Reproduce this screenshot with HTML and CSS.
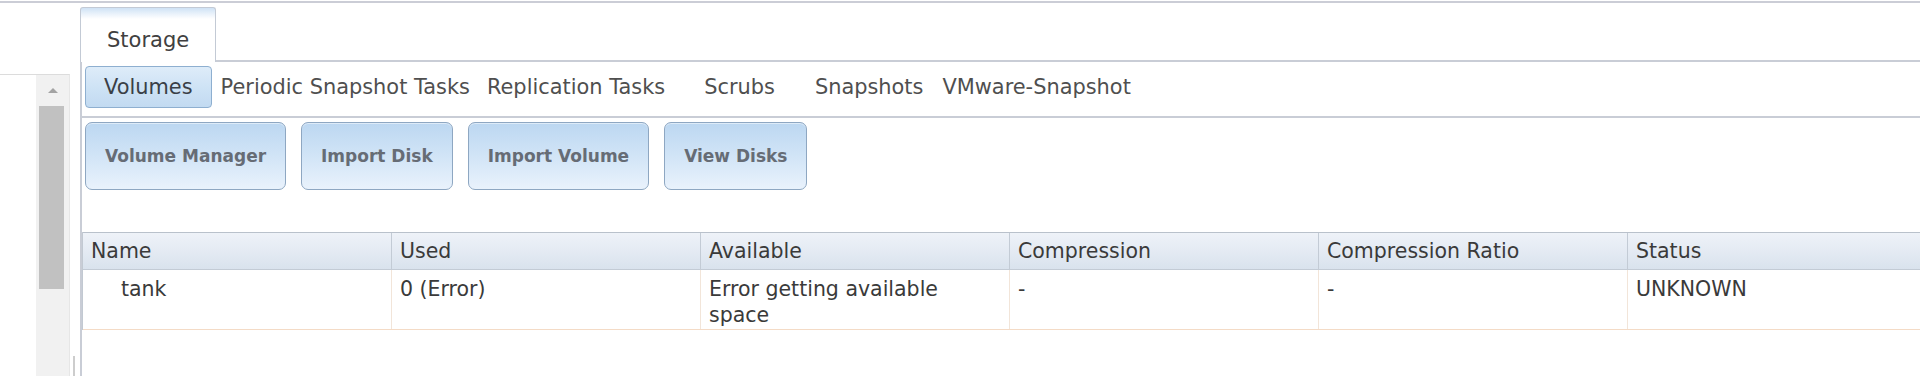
FILE: index.html
```html
<!DOCTYPE html>
<html>
<head>
<meta charset="utf-8">
<title>Storage</title>
<link rel="stylesheet" href="styles.css">
</head>
<body>
<div class="topline"></div>
<div class="layout">
  <aside class="side">
    <div class="side-head"></div>
    <div class="side-body">
      <div class="side-content"></div>
      <div class="scrollbar">
        <div class="sb-arrow-box"><div class="sb-arrow"></div></div>
        <div class="sb-thumb"></div>
      </div>
    </div>
  </aside>
  <div class="splitter"><div class="splitter-grip"></div></div>
  <main class="main">
    <div class="tabstrip">
      <div class="tab">Storage</div>
      <div class="tabfill"></div>
    </div>
    <div class="pane">
      <div class="subtabs">
        <div class="subtab subtab-active">Volumes</div>
        <div class="subtab">Periodic Snapshot Tasks</div>
        <div class="subtab subtab-repl">Replication Tasks</div>
        <div class="subtab subtab-scrubs">Scrubs</div>
        <div class="subtab">Snapshots</div>
        <div class="subtab subtab-last">VMware-Snapshot</div>
      </div>
      <div class="actions">
        <button class="btn">Volume Manager</button>
        <button class="btn">Import Disk</button>
        <button class="btn">Import Volume</button>
        <button class="btn">View Disks</button>
      </div>
      <div class="grid">
        <div class="grid-row grid-head">
          <div class="hcell">Name</div>
          <div class="hcell">Used</div>
          <div class="hcell">Available</div>
          <div class="hcell">Compression</div>
          <div class="hcell">Compression Ratio</div>
          <div class="hcell">Status</div>
        </div>
        <div class="grid-row grid-body-row">
          <div class="cell"><span class="tree-indent">tank</span></div>
          <div class="cell">0 (Error)</div>
          <div class="cell">Error getting available space</div>
          <div class="cell">-</div>
          <div class="cell">-</div>
          <div class="cell">UNKNOWN</div>
        </div>
      </div>
    </div>
  </main>
</div>
</body>
</html>
```

FILE: styles.css
```css
* { box-sizing: border-box; }

html, body {
  margin: 0;
  padding: 0;
  width: 1920px;
  height: 376px;
  overflow: hidden;
  background: #ffffff;
  font-family: "DejaVu Sans", Verdana, sans-serif;
  color: #3c3c3c;
}

body { padding-top: 1px; }

.topline {
  height: 2px;
  background: #cbcdd6;
}

.layout {
  display: flex;
  height: 373px;
}

/* left panel */
.side {
  width: 70px;
  display: flex;
  flex-direction: column;
}

.side-head { height: 71px; }

.side-body {
  flex: 1;
  display: flex;
  border-top: 1px solid #dcdcdc;
  border-right: 1px solid #e6e6e6;
}

.side-content { width: 36px; }

.scrollbar {
  width: 33px;
  background: #f1f1f1;
  display: flex;
  flex-direction: column;
}

.sb-arrow-box {
  height: 31px;
  display: flex;
  align-items: center;
  justify-content: center;
  padding-left: 1px;
}

.sb-arrow {
  width: 0;
  height: 0;
  border-left: 5px solid transparent;
  border-right: 5px solid transparent;
  border-bottom: 5px solid #a3a3a3;
}

.sb-thumb {
  width: 25px;
  height: 183px;
  margin-left: 3px;
  background: #c1c1c1;
}

.splitter {
  width: 10px;
  display: flex;
  flex-direction: column;
  justify-content: flex-end;
}

.splitter-grip {
  width: 2px;
  height: 20px;
  margin-left: 3px;
  background: #cdcdcd;
}

/* main */
.main {
  flex: 1;
  display: flex;
  flex-direction: column;
  min-width: 0;
}

.tabstrip {
  display: flex;
  height: 59px;
  padding-top: 4px;
}

.tab {
  height: 55px;
  padding: 19px 26px 0;
  font-size: 21px;
  line-height: 26px;
  color: #404040;
  border: 1px solid #c3cad5;
  border-bottom: none;
  border-radius: 3px 3px 0 0;
  background: linear-gradient(to bottom, #cfe2f5 0px, #e6f0fa 5px, #ffffff 11px, #ffffff 100%);
}

.tabfill {
  flex: 1;
  border-bottom: 2px solid #c9cdd6;
}

.pane {
  flex: 1;
  border-left: 2px solid #c9cdd6;
  min-width: 0;
}

.subtabs {
  display: flex;
  align-items: flex-start;
  height: 56px;
  padding: 4px 0 0 3px;
  border-bottom: 2px solid #c9cdd6;
}

.subtab {
  height: 42px;
  line-height: 42px;
  padding: 0 9px;
  font-size: 20.9px;
  color: #4f4f4f;
  white-space: nowrap;
}

.subtab-active {
  line-height: 40px;
  padding: 0 18px;
  color: #3a3f47;
  border: 1px solid #8eafd0;
  border-radius: 4px;
  background: linear-gradient(to bottom, #deecf9 0%, #cde2f5 55%, #c2daf1 100%);
}

.subtab-active + .subtab { padding-left: 9px; }

.subtab-repl { padding-left: 8px; }

.subtab-scrubs { padding: 0 31px 0 30px; }

.subtab-last { padding-left: 10px; }

.actions {
  display: flex;
  gap: 15px;
  padding: 4px 0 0 3px;
}

.btn {
  height: 68px;
  padding: 0 19px;
  font-family: "DejaVu Sans", Verdana, sans-serif;
  font-size: 17px;
  font-weight: bold;
  color: #666c75;
  border: 1px solid #8ea7c2;
  border-radius: 7px;
  background: linear-gradient(to bottom, #bcd7f1 0%, #cfe3f6 45%, #e9f2fc 100%);
  box-shadow: inset 0 1px 0 rgba(255,255,255,0.5);
}

/* grid */
.grid {
  margin-top: 42px;
  width: 1855px;
  border-left: 1px solid #c2c9d2;
}

.grid-row {
  display: grid;
  grid-template-columns: repeat(6, 309px);
}

.grid-head {
  height: 38px;
  border-top: 1px solid #b9c1cb;
  border-bottom: 1px solid #c3cbd5;
  background: linear-gradient(to bottom, #eef2f8 0%, #e2e9f2 60%, #d9e2ed 100%);
}

.hcell {
  padding: 0 8px;
  font-size: 20.5px;
  line-height: 36px;
  color: #3a3a3a;
  border-right: 1px solid #c3cbd5;
  white-space: nowrap;
}

.grid-body-row {
  height: 60px;
  border-bottom: 1px solid #f4dbc6;
}

.cell {
  padding: 6px 8px 0;
  font-size: 20.5px;
  line-height: 26px;
  color: #3a3a3a;
  border-right: 1px solid #f2e5d9;
}

.tree-indent { padding-left: 30px; }
```
